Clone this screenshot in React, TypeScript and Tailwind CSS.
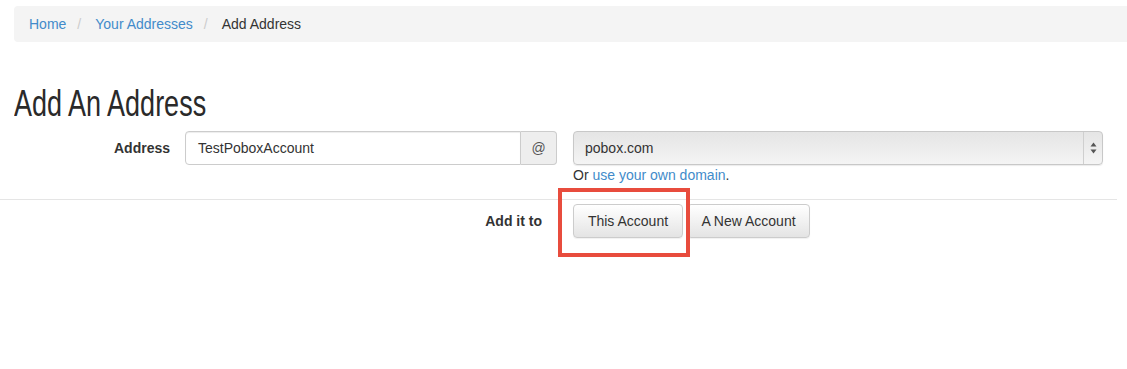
import React from "react";

const crumbs = [
  { label: "Home", link: true },
  { label: "Your Addresses", link: true },
  { label: "Add Address", link: false },
];

const SelectArrows = () => (
  <svg width="7" height="12" viewBox="0 0 7 12" className="block">
    <polygon points="3.5,0.5 6.5,4.5 0.5,4.5" fill="#555" />
    <polygon points="0.5,7.5 6.5,7.5 3.5,11.5" fill="#555" />
  </svg>
);

export default function App() {
  return (
    <div className="w-[1127px] h-[369px] bg-white text-[14px] text-[#333] font-['Liberation_Sans',Arial,sans-serif] overflow-hidden">
      {/* breadcrumb */}
      <div className="mt-[6px] ml-[14px] h-[36px] bg-[#f4f4f4] rounded-l-[4px] px-[15px] flex items-center">
        {crumbs.map((c, i) => (
          <div key={i} className="flex items-center">
            {i > 0 && <span className="text-[#ccc] pl-[11px] pr-[14px]">/</span>}
            <span className={c.link ? "text-[#428bca]" : "text-[#333]"}>{c.label}</span>
          </div>
        ))}
      </div>

      {/* narrow display heading */}
      <h1 className="mt-[42px] ml-[14px] h-[40px] leading-[40px] text-[36px] text-[#2a2a2a] whitespace-nowrap origin-left scale-x-[0.75]">
        Add An Address
      </h1>

      {/* address row */}
      <div className="mt-[7px] flex items-start">
        <div className="w-[185px] pr-[15px] h-[34px] flex items-center justify-end font-bold">
          Address
        </div>
        <div className="w-[372px] h-[34px] flex">
          <div className="flex-1 h-full border border-[#ccc] rounded-l-[4px] px-[12px] flex items-center shadow-[inset_0_1px_1px_rgba(0,0,0,0.075)]">
            TestPoboxAccount
          </div>
          <div className="w-[36px] h-full border border-l-0 border-[#ccc] rounded-r-[4px] bg-[#eee] flex items-center justify-center text-[#555]">
            @
          </div>
        </div>
        <div className="ml-[16px] w-[530px]">
          <div className="h-[34px] border border-[#c8c8c8] rounded-[4px] bg-linear-to-b from-[#e5e5e5] to-[#f4f4f4] flex shadow-[0_1px_1px_rgba(0,0,0,0.08)]">
            <div className="flex-1 pl-[11px] flex items-center text-[#333]">pobox.com</div>
            <div className="w-[19px] border-l border-[#cfcfcf] flex items-center justify-center">
              <SelectArrows />
            </div>
          </div>
          <div className="h-[20px] leading-[20px]">
            Or <span className="text-[#428bca]">use your own domain</span>.
          </div>
        </div>
      </div>

      <div className="mt-[14px] w-[1117px] h-px bg-[#e5e5e5]" />

      {/* add it to row */}
      <div className="mt-[4px] flex items-start">
        <div className="w-[557px] pr-[15px] h-[34px] flex items-center justify-end font-bold">
          Add it to
        </div>
        <div className="ml-[16px] flex gap-[4px]">
          <div className="relative">
            <button className="h-[34px] w-[110px] border border-[#ccc] rounded-[4px] bg-linear-to-b from-[#fff] to-[#e4e4e4] text-[#333] shadow-[0_1px_1px_rgba(0,0,0,0.06)]">
              This Account
            </button>
            <div className="absolute left-[-15px] top-[-16px] w-[132px] h-[69px] border-[4.5px] border-[#e84c3d] pointer-events-none z-10" />
          </div>
          <button className="h-[34px] w-[123px] border border-[#ccc] rounded-[4px] bg-linear-to-b from-[#fff] to-[#e4e4e4] text-[#333] shadow-[0_1px_1px_rgba(0,0,0,0.06)]">
            A New Account
          </button>
        </div>
      </div>
    </div>
  );
}
